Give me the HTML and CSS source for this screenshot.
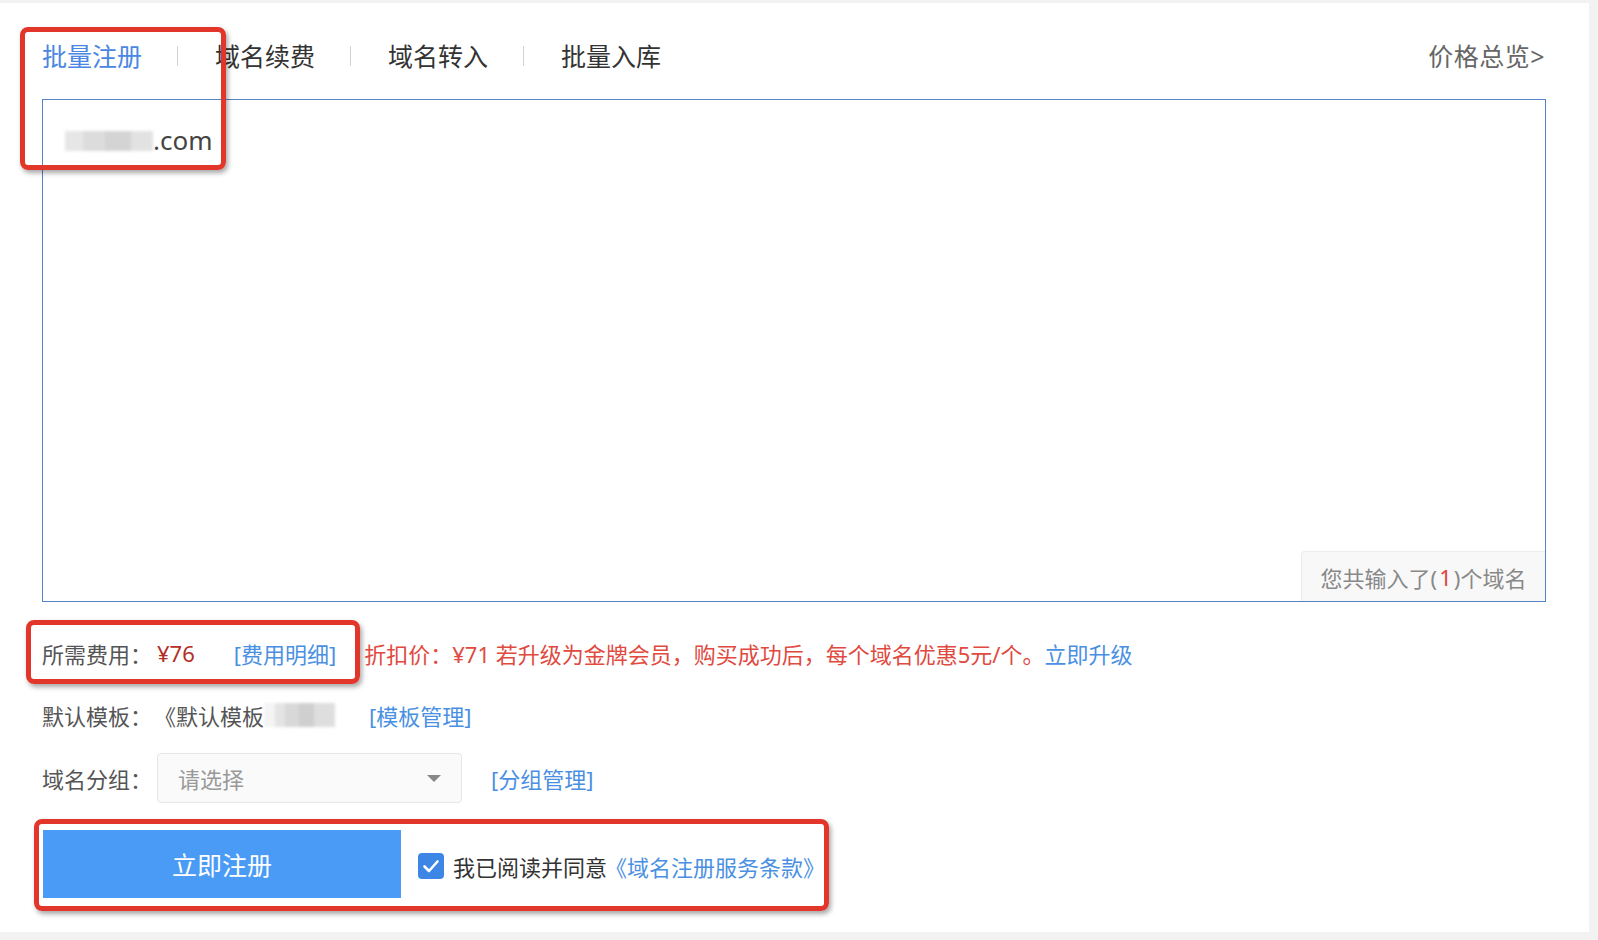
FILE: index.html
```html
<!DOCTYPE html>
<html lang="zh-CN">
<head>
<meta charset="utf-8">
<title>批量注册</title>
<link rel="stylesheet" href="styles.css">
</head>
<body>
<div class="panel">
  <div class="tabbar">
    <span class="tab active">批量注册</span>
    <span class="sep"></span>
    <span class="tab">域名续费</span>
    <span class="sep"></span>
    <span class="tab">域名转入</span>
    <span class="sep"></span>
    <span class="tab">批量入库</span>
    <a class="overview">价格总览&gt;</a>
  </div>

  <div class="editor">
    <div class="line"><span class="blur blur-domain"></span>.com</div>
    <div class="counter">您共输入了(<em>1</em>)个域名</div>
  </div>

  <div class="row row-price">
    <span class="label">所需费用：</span>
    <span class="price">¥76</span>
    <a class="link link-fee">[费用明细]</a>
    <span class="discount">折扣价：¥71 若升级为金牌会员，购买成功后，每个域名优惠5元/个。<a class="link">立即升级</a></span>
  </div>

  <div class="row row-template">
    <span class="label">默认模板：</span>
    <span class="value">《默认模板</span><span class="blur blur-template"></span>
    <a class="link link-template">[模板管理]</a>
  </div>

  <div class="row row-group">
    <span class="label">域名分组：</span>
    <div class="select">
      <span class="placeholder">请选择</span>
      <span class="caret"></span>
    </div>
    <a class="link link-group">[分组管理]</a>
  </div>

  <div class="row row-submit">
    <button class="submit">立即注册</button>
    <span class="checkbox">
      <svg viewBox="0 0 26 26" width="26" height="26"><path d="M6.5 13.5 L11 18 L19.5 8.5" fill="none" stroke="#fff" stroke-width="2.6" stroke-linecap="round" stroke-linejoin="round"/></svg>
    </span>
    <span class="agree">我已阅读并同意</span><a class="link terms">《域名注册服务条款》</a>
  </div>

  <div class="mark mark-tabs"></div>
  <div class="mark mark-price"></div>
  <div class="mark mark-submit"></div>
</div>
</body>
</html>
```

FILE: styles.css
```css
html, body {
  margin: 0;
  padding: 0;
}
body {
  background: #f2f2f2;
  font-family: "Noto Sans", "Noto Sans CJK SC", sans-serif;
  color: #555;
  width: 1598px;
  height: 940px;
  overflow: hidden;
}
.panel {
  position: relative;
  margin-top: 3px;
  width: 1589px;
  height: 929px;
  background: #fff;
  padding: 0 43px 0 42px;
  box-sizing: border-box;
}
.tabbar {
  display: flex;
  align-items: center;
  height: 86px;
  padding-top: 10px;
}
.tab {
  font-size: 25px;
  color: #333;
  line-height: 30px;
  white-space: nowrap;
}
.tab.active {
  color: #4a86e2;
}
.sep {
  width: 1px;
  height: 20px;
  background: #d2d2d2;
  margin: 0 37px 0 35px;
}
.overview {
  margin-left: auto;
  font-size: 25px;
  color: #666;
  line-height: 30px;
  margin-right: 1px;
  letter-spacing: 0.5px;
}
.editor {
  position: relative;
  height: 503px;
  border: 1px solid #5683c6;
  box-sizing: border-box;
  padding: 24px 22px;
}
.line {
  font-size: 26px;
  line-height: 32px;
  color: #444;
  display: flex;
  align-items: center;
}
.blur {
  display: inline-block;
  filter: blur(1.5px);
}
.blur-domain {
  width: 88px;
  height: 20px;
  background: linear-gradient(90deg, #e6e6e6 0 20%, #dcdcdc 20% 45%, #d4d4d4 45% 75%, #e2e2e2 75% 100%);
  margin-top: 2px;
}
.counter {
  position: absolute;
  right: 0;
  bottom: 0;
  width: 244px;
  height: 50px;
  box-sizing: border-box;
  background: #f8f8f8;
  border-top: 1px solid #ececec;
  border-left: 1px solid #ececec;
  border-top-left-radius: 4px;
  font-size: 22px;
  color: #888;
  display: flex;
  align-items: center;
  justify-content: center;
}
.counter em {
  font-style: normal;
  color: #e0463c;
  padding: 0 2px;
}
.row {
  display: flex;
  align-items: center;
  font-size: 22px;
  white-space: nowrap;
}
.row-price {
  height: 50px;
  margin-top: 26px;
}
.row-template {
  height: 50px;
  margin-top: 12px;
}
.row-group {
  height: 50px;
  margin-top: 13px;
}
.row-submit {
  height: 68px;
  margin-top: 27px;
}
.label {
  width: 115px;
  color: #555;
}
.price {
  color: #b32e27;
}
.link {
  color: #4a90e2;
  cursor: pointer;
}
.link-fee {
  margin-left: 39px;
}
.discount {
  margin-left: 28px;
  color: #e04a3f;
}
.value {
  color: #555;
  margin-left: -3px;
}
.blur-template {
  width: 71px;
  height: 24px;
  background: linear-gradient(90deg, #f4f4f4 0 15%, #e4e4e4 15% 30%, #d8d8d8 30% 50%, #cfcfcf 50% 70%, #dedede 70% 100%);
}
.link-template {
  margin-left: 34px;
}
.select {
  width: 305px;
  height: 50px;
  box-sizing: border-box;
  border: 1px solid #e6e6e6;
  border-radius: 4px;
  background: #fafafa;
  display: flex;
  align-items: center;
  padding: 0 20px;
  margin-left: 0;
}
.placeholder {
  color: #999;
}
.caret {
  margin-left: auto;
  width: 0;
  height: 0;
  border-left: 7px solid transparent;
  border-right: 7px solid transparent;
  border-top: 7px solid #888;
}
.link-group {
  margin-left: 29px;
}
.submit {
  width: 358px;
  height: 68px;
  border: 0;
  background: #4a9bf6;
  color: #fff;
  font-family: "Noto Sans", "Noto Sans CJK SC", sans-serif;
  font-size: 25px;
  padding: 0;
  margin-left: 1px;
}
.checkbox {
  width: 26px;
  height: 26px;
  border-radius: 4px;
  background: #3d86e6;
  margin-left: 17px;
  display: flex;
  margin-top: 4px;
}
.agree {
  margin-left: 9px;
  color: #333;
  margin-top: 4px;
}
.terms {
  margin-top: 4px;
  margin-left: -2px;
}
.mark {
  position: absolute;
  border: 5px solid #e3362b;
  border-radius: 8px;
  box-shadow: 2px 3px 5px rgba(0, 0, 0, 0.35);
  box-sizing: border-box;
  pointer-events: none;
}
.mark-tabs {
  left: 20px;
  top: 24px;
  width: 206px;
  height: 143px;
}
.mark-price {
  left: 26px;
  top: 617px;
  width: 334px;
  height: 64px;
}
.mark-submit {
  left: 34px;
  top: 816px;
  width: 795px;
  height: 92px;
}
```
